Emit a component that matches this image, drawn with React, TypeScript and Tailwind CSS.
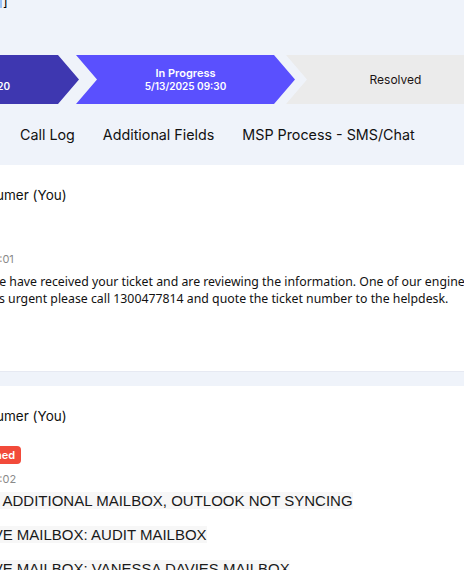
const steps = [
  { title: "New", date: "5/13/2025 09:20", cls: "bg-[#3e37b0] text-white" },
  { title: "In Progress", date: "5/13/2025 09:30", cls: "bg-[#5a50fe] text-white" },
  { title: "Resolved", date: "", cls: "bg-[#ebebeb] text-[#1c1414]" },
];

const tabs = ["Call Log", "Additional Fields", "MSP Process - SMS/Chat"];

const chevron =
  "[clip-path:polygon(0_0,calc(100%_-_21px)_0,100%_50%,calc(100%_-_21px)_100%,0_100%,21px_50%)]";

export default function App() {
  return (
    <div className="min-h-screen overflow-hidden bg-[#eff3fa] font-['Inter',sans-serif]">
      <div className="h-[55px]">
        <div className="flex items-start">
          <span className="h-[8px] w-[2px] bg-[#9cc3f5]" />
          <span className="-mt-[5px] ml-[1px] text-[13px] leading-none text-black">]</span>
        </div>
      </div>

      <div className="-ml-[140px] flex h-[49px]">
        {steps.map((s, i) => (
          <div
            key={s.title}
            className={`${chevron} ${s.cls} flex w-[219px] shrink-0 flex-col items-center justify-center ${
              i === 0 ? "" : i === 1 ? "-ml-[3px]" : "-ml-[9px]"
            }`}
          >
            {s.date ? (
              <>
                <span className="text-[11px] font-semibold leading-[14px]">{s.title}</span>
                <span className="text-[10px] font-semibold leading-[13px]">{s.date}</span>
              </>
            ) : (
              <span className="text-[12px] leading-[15px]">{s.title}</span>
            )}
          </div>
        ))}
      </div>

      <nav className="flex h-[61px] items-center gap-[28px] pl-[20px] text-[14.3px] text-[#111]">
        {tabs.map((t) => (
          <span key={t} className="whitespace-nowrap">
            {t}
          </span>
        ))}
      </nav>

      <section className="h-[206px] bg-white pt-[20px] shadow-[0_1px_0_#e6e9f2]">
        <div className="-ml-[37px] text-[13.5px] leading-[20px] text-[#111]">Consumer (You)</div>
        <div className="-ml-[85px] mt-[46px] text-[11px] leading-[16px] text-[#8a8a8a]">
          5/13/2025 09:31:01
        </div>
        <div className="-ml-[12px] mt-[6px] whitespace-nowrap font-['Noto_Sans',sans-serif] text-[12.3px] leading-[17px] text-[#111]">
          <p>
            We have received your ticket and are reviewing the information. One of our engineers will
            be in touch shortly. If
          </p>
          <p className="-ml-[3px]">
            it is urgent please call 1300477814 and quote the ticket number to the helpdesk.
          </p>
        </div>
      </section>

      <section className="mt-[15px] h-[300px] bg-white pt-[20px]">
        <div className="-ml-[37px] text-[13.5px] leading-[20px] text-[#111]">Consumer (You)</div>
        <div className="-ml-[58px] mt-[20px] flex">
          <span className="rounded-[4px] bg-[#f24a3a] px-[6px] text-[11px] font-semibold leading-[18px] text-white">
            Unpublished
          </span>
        </div>
        <div className="-ml-[87px] mt-[7px] text-[11px] leading-[16px] text-[#8a8a8a]">
          5/13/2025 09:25:02
        </div>
        <div className="-ml-[50px] mt-[5px] font-['Liberation_Sans',Arial,sans-serif] text-[15px] leading-[17px] text-[#1a1a1a]">
          <p className="mb-[17px]">
            <span className="bg-[#f7f7f7]">ISSUE: ADDITIONAL MAILBOX, OUTLOOK NOT SYNCING</span>
          </p>
          <p className="-ml-[4px] mb-[17px]">
            <span className="bg-[#f7f7f7]">ARCHIVE MAILBOX: AUDIT MAILBOX</span>
          </p>
          <p className="-ml-[4px] mb-[17px]">
            <span className="bg-[#f7f7f7]">ARCHIVE MAILBOX: VANESSA DAVIES MAILBOX</span>
          </p>
        </div>
      </section>
    </div>
  );
}
